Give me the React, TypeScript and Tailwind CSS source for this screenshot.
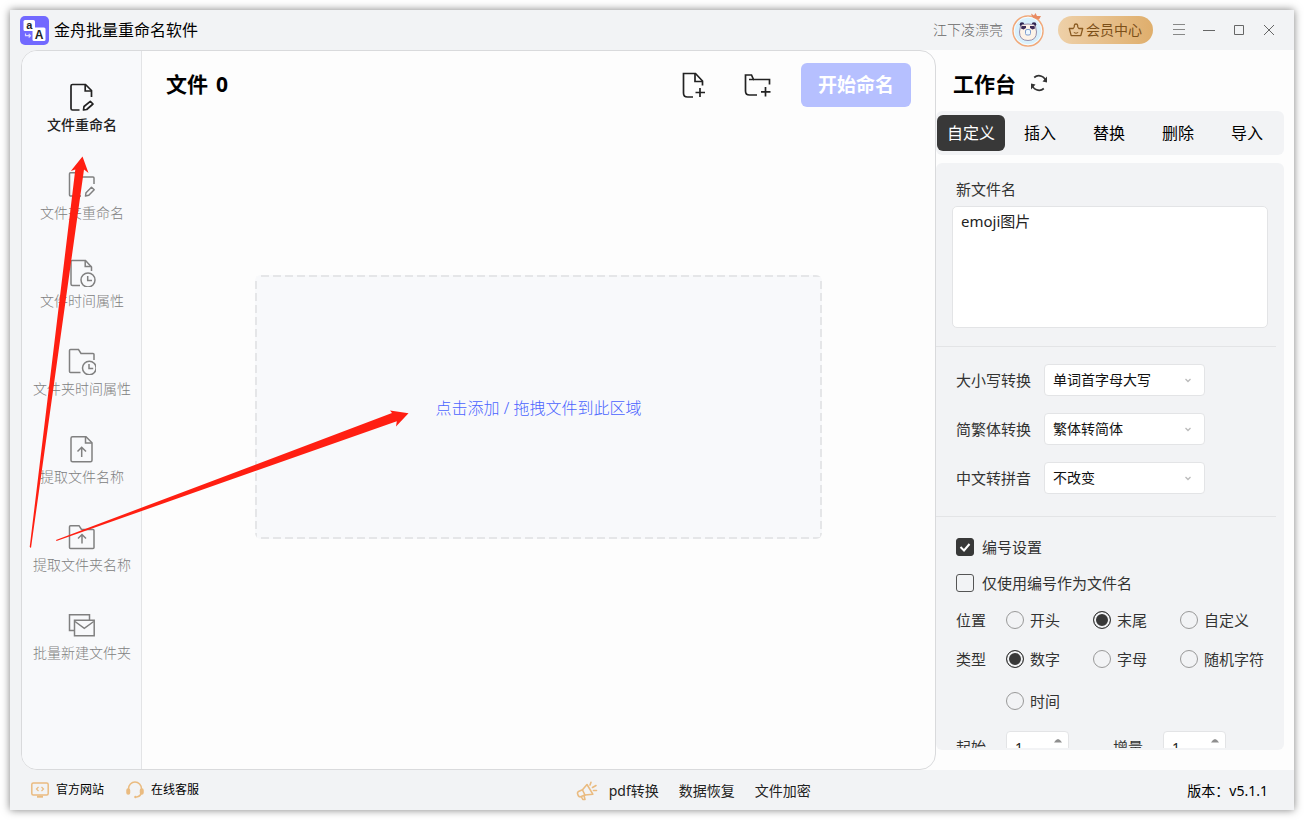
import { useState, type ReactNode } from 'react';

const iconProps = { fill: 'none', stroke: 'currentColor', strokeWidth: 1.7 } as const;

function FileEdit() {
  return (
    <svg viewBox="0 0 28 28" className="size-7" {...iconProps} aria-hidden="true">
      <path d="M11.500 27H4.500Q3 27 3 25.500V3Q3 1.500 4.500 1.500H17.500L23.500 7.500V14" />
      <path d="M17.200 1.500V8H23.500" />
      <path d="M15.500 27L16 23.500 22.300 18.300 25 21 18.700 26.500Z" strokeLinejoin="round" />
    </svg>
  );
}

function FolderEdit() {
  return (
    <svg viewBox="0 0 28 28" className="size-7" {...iconProps} strokeWidth={1.5} aria-hidden="true">
      <path d="M13 25H2.500Q1.500 25 1.500 24V2.700Q1.500 1.700 2.500 1.700H11L13.500 6H25Q26 6 26 7V13" />
      <path d="M17.500 25L18 21.700 23.500 16.200 26.200 18.800 20.800 24.300Z" strokeLinejoin="round" />
    </svg>
  );
}

function FileClock() {
  return (
    <svg viewBox="0 0 28 28" className="size-7" {...iconProps} strokeWidth={1.5} aria-hidden="true">
      <path d="M12 26.500H4.500Q3 26.500 3 25V2.500Q3 1.500 4 1.500H17.500L23.500 8V12" />
      <path d="M17.200 1.500V7.500H23.500" />
      <circle cx="20" cy="21" r="7" />
      <path d="M19.700 17V21.500H24" />
    </svg>
  );
}

function FolderClock() {
  return (
    <svg viewBox="0 0 28 28" className="size-7" {...iconProps} strokeWidth={1.5} aria-hidden="true">
      <path d="M12.500 25.500H2.500Q1.500 25.500 1.500 24.500V3.500Q1.500 2.500 2.500 2.500H10.500L13 6.500H25Q26 6.500 26 7.500V13" />
      <circle cx="21.300" cy="21" r="6.800" />
      <path d="M21 17V21.500H25.200" />
    </svg>
  );
}

function FileUp() {
  return (
    <svg viewBox="0 0 28 28" className="size-7" {...iconProps} strokeWidth={1.5} aria-hidden="true">
      <path d="M4.500 1.700H18L24 7.700V25.300Q24 26.800 22.500 26.800H4.500Q3 26.800 3 25.300V3.200Q3 1.700 4.500 1.700Z" />
      <path d="M17.500 1.700V8H24" />
      <path d="M13.700 22V12.500M9.500 16.500L13.700 12.300 18 16.500" />
    </svg>
  );
}

function FolderUp() {
  return (
    <svg viewBox="0 0 28 28" className="size-7" {...iconProps} strokeWidth={1.5} aria-hidden="true">
      <path d="M2.500 2.700H11L13.500 6.500H25Q26 6.500 26 7.500V24.500Q26 25.500 25 25.500H2.500Q1.500 25.500 1.500 24.500V3.700Q1.500 2.700 2.500 2.700Z" />
      <path d="M14 20.500V12M10 15.500L14 11.500 18 15.500" />
    </svg>
  );
}

function BatchFolder() {
  return (
    <svg viewBox="0 0 28 28" className="size-7" {...iconProps} strokeWidth={1.5} aria-hidden="true">
      <path d="M6.500 19.500H1.500V3.700H21.500V9" />
      <path d="M6.500 9.200H26.200V24.700H6.500Z" />
      <path d="M7 10.500L16.300 17.300 25.700 10.500" />
    </svg>
  );
}

const navItems: { label: string; icon: ReactNode }[] = [
  { label: '文件重命名', icon: <FileEdit /> },
  { label: '文件夹重命名', icon: <FolderEdit /> },
  { label: '文件时间属性', icon: <FileClock /> },
  { label: '文件夹时间属性', icon: <FolderClock /> },
  { label: '提取文件名称', icon: <FileUp /> },
  { label: '提取文件夹名称', icon: <FolderUp /> },
  { label: '批量新建文件夹', icon: <BatchFolder /> },
];

function Logo() {
  return (
    <svg viewBox="0 0 29 29" className="size-[29px] shrink-0" aria-hidden="true">
      <rect width="29" height="29" rx="5" fill="#7269ff" />
      <rect x="3.500" y="4" width="11.500" height="11" rx="1.500" fill="#fff" />
      <rect x="12.500" y="11.500" width="13" height="13.500" rx="1.500" fill="#fff" />
      <text x="9.200" y="13" textAnchor="middle" fontSize="11" fontWeight="700" fontFamily="Liberation Sans, sans-serif" fill="#222">a</text>
      <text x="19" y="22.500" textAnchor="middle" fontSize="12" fontWeight="700" fontFamily="Liberation Sans, sans-serif" fill="#222">A</text>
      <path d="M5.500 17.500V19.700H10.500M8.700 17.900L10.500 19.700 8.700 21.500" fill="none" stroke="#dcd9ff" strokeWidth="1.200" />
    </svg>
  );
}

function Avatar() {
  return (
    <svg viewBox="0 0 34 36" className="h-9 w-[34px] shrink-0" role="img" aria-label="头像">
      <circle cx="17" cy="19" r="15" fill="#d9f0fc" stroke="#f2a878" strokeWidth="1.500" />
      <circle cx="17" cy="19" r="13.800" fill="none" stroke="#fff" strokeWidth="0.800" />
      <path d="M21 4.500L20 1.500 23 3.500 24.500 1 26 4 30 4 28 7.500 22.500 6Z" fill="#e88a62" />
      <circle cx="11" cy="12.500" r="2.300" fill="#2f2450" />
      <circle cx="23" cy="12.500" r="2.300" fill="#2f2450" />
      <path d="M9.500 14Q10.500 12 17 12T24.500 14L25.500 20Q25.500 28.500 17 28.500T8.500 20Z" fill="#fdf3e8" stroke="#8e83a3" strokeWidth="0.900" />
      <path d="M10.500 14H15V16L12.500 17.500 10 16.500ZM23.500 14H19V16L21.500 17.500 24 16.500Z" fill="#3b2a55" />
      <rect x="14.500" y="17.500" width="5" height="5.500" rx="1.500" fill="#eef8ff" stroke="#7f9fd0" />
    </svg>
  );
}

function Crown() {
  return (
    <svg viewBox="0 0 16 16" className="size-4" fill="none" stroke="#8a5a20" strokeWidth="1.300" strokeLinejoin="round" aria-hidden="true">
      <path d="M3.200 13.700L1.300 6.500H5.200Q6.800 5.500 6.300 3.500Q6.500 2 8 2T9.700 3.500Q9.200 5.500 10.800 6.500H14.700L12.800 13.700Z" />
      <path d="M5.800 10.500Q8 12 10.200 10.500" strokeWidth="1" />
    </svg>
  );
}

function WindowButton({ label, children }: { label: string; children: ReactNode }) {
  return (
    <button type="button" aria-label={label} className="flex size-[30px] items-center justify-center text-[#666]">
      <svg viewBox="0 0 12 12" className="size-3" fill="none" stroke="currentColor" aria-hidden="true">
        {children}
      </svg>
    </button>
  );
}

function TitleBar() {
  return (
    <header className="flex h-10 shrink-0 items-center justify-between pr-2.5 pl-2.5">
      <div className="flex items-center gap-[5px]">
        <Logo />
        <h1 className="text-base text-black">金舟批量重命名软件</h1>
      </div>
      <div className="flex items-center">
        <span className="text-sm font-light text-[#666]">江下凌漂亮</span>
        <span className="mr-[13px] ml-2">
          <Avatar />
        </span>
        <button type="button" className="mr-[11px] flex h-7 items-center gap-0.5 rounded-full bg-linear-to-r from-[#eed0a8] to-[#dfae6c] pr-[11px] pl-2.5 text-sm text-[#7c4f18]">
          <Crown />
          会员中心
        </button>
        <WindowButton label="菜单">
          <path d="M0 0.500H12M0 5.500H12M0 10.500H12" stroke="#888" />
        </WindowButton>
        <WindowButton label="最小化">
          <path d="M0 6.500H12" />
        </WindowButton>
        <WindowButton label="最大化">
          <path d="M1.500 1.500H10.500V10.500H1.500Z" />
        </WindowButton>
        <WindowButton label="关闭">
          <path d="M1 1L11 11M11 1L1 11" />
        </WindowButton>
      </div>
    </header>
  );
}

function Sidebar() {
  const [active, setActive] = useState(0);
  return (
    <nav className="w-[120px] shrink-0 border-r border-[#e3e4e6] bg-[#f8f9fb] pt-8 pl-px">
      {navItems.map((item, i) => (
        <button
          key={item.label}
          type="button"
          onClick={() => setActive(i)}
          className={
            i === active
              ? 'flex h-[88px] w-full flex-col items-center gap-1 text-sm font-medium text-[#222]'
              : 'flex h-[88px] w-full flex-col items-center gap-1 text-sm font-light text-[#808080]'
          }
        >
          {item.icon}
          <span>{item.label}</span>
        </button>
      ))}
    </nav>
  );
}

function FileArea() {
  return (
    <main className="flex min-w-0 flex-1 flex-col">
      <div className="flex h-[68px] shrink-0 items-center justify-between pr-6 pl-6">
        <h2 className="flex gap-2 text-[21px] font-bold text-black">
          文件 <span>0</span>
        </h2>
        <div className="flex items-center">
          <button type="button" aria-label="添加文件" className="mr-9">
            <svg viewBox="0 0 28 28" className="size-7" fill="none" stroke="#222" strokeWidth="1.700" aria-hidden="true">
              <path d="M13 26H7.500Q3.500 26 3.500 22V2.500H15.500L22.500 10V14.500" />
              <path d="M15 2.500V10.500H22.500M20 17V26M15.500 21.500H25" />
            </svg>
          </button>
          <button type="button" aria-label="添加文件夹" className="mr-[29px]">
            <svg viewBox="0 0 28 28" className="size-7" fill="none" stroke="#222" strokeWidth="1.700" aria-hidden="true">
              <path d="M13 24H5.500Q1.500 24 1.500 20V4H7.500L9.500 8.500H25.500V13.500" />
              <path d="M5 8.500H10M21.500 16V25.500M17 20.800H26.500" />
            </svg>
          </button>
          <button type="button" className="h-11 w-[110px] rounded-md bg-[#b6c0ff] text-[19px] font-bold text-white">
            开始命名
          </button>
        </div>
      </div>
      <div className="flex flex-1 items-center justify-center pb-[74px]">
        <button
          type="button"
          className="flex h-[264px] w-5/7 items-center justify-center rounded-md bg-[#f8f9fb] bg-no-repeat pt-0.5 text-base font-light text-[#4a64ff] [background-image:repeating-linear-gradient(90deg,#e5e6e8_0_2px,transparent_2px_6px,#e5e6e8_6px_12px),repeating-linear-gradient(90deg,#e5e6e8_0_2px,transparent_2px_6px,#e5e6e8_6px_12px),repeating-linear-gradient(#e5e6e8_0_2px,transparent_2px_6px,#e5e6e8_6px_12px),repeating-linear-gradient(#e5e6e8_0_2px,transparent_2px_6px,#e5e6e8_6px_12px)] [background-position:top,bottom,left,right] [background-size:100%_2px,100%_2px,2px_100%,2px_100%]"
        >
          点击添加 / 拖拽文件到此区域
        </button>
      </div>
    </main>
  );
}

const conversions = [
  { id: 'letter-case', label: '大小写转换', options: ['单词首字母大写', '不改变'] },
  { id: 'script', label: '简繁体转换', options: ['繁体转简体', '不改变'] },
  { id: 'pinyin', label: '中文转拼音', options: ['不改变'] },
];

function Check({ label, defaultChecked }: { label: string; defaultChecked?: boolean }) {
  return (
    <label className="flex h-5 items-center gap-2">
      <span className="relative flex size-[18px]">
        <input type="checkbox" defaultChecked={defaultChecked} className="peer size-[18px] appearance-none rounded-[3px] border border-[#555] checked:border-[#383838] checked:bg-[#383838]" />
        <svg viewBox="0 0 18 18" className="pointer-events-none absolute inset-0 hidden size-[18px] peer-checked:block" fill="none" stroke="#fff" strokeWidth="2" aria-hidden="true">
          <path d="M4.500 9L8 12.500 13.500 6" />
        </svg>
      </span>
      {label}
    </label>
  );
}

function Radio({ name, label, defaultChecked }: { name: string; label: string; defaultChecked?: boolean }) {
  return (
    <label className="flex h-5 items-center gap-1.5 whitespace-nowrap">
      <input
        type="radio"
        name={name}
        defaultChecked={defaultChecked}
        className="size-[18px] shrink-0 appearance-none rounded-full border border-[#999] checked:border-[#383838] checked:bg-[#383838] checked:shadow-[inset_0_0_0_2px_#f2f3f5]"
      />
      {label}
    </label>
  );
}

function NumberField({ id, label }: { id: string; label: string }) {
  const [value, setValue] = useState(1);
  return (
    <div className="flex h-8 w-[157px] items-center">
      <label htmlFor={id} className="w-[50px]">
        {label}
      </label>
      <span className="relative flex">
        <input
          id={id}
          type="number"
          value={value}
          onChange={(e) => setValue(Number(e.target.value))}
          className="h-8 w-[63px] appearance-none rounded border border-[#e3e4e6] bg-white pl-2 text-sm text-[#222] [appearance:textfield] [&::-webkit-inner-spin-button]:appearance-none"
        />
        <span className="absolute inset-y-0 right-1.5 flex flex-col justify-center gap-2">
          <button type="button" aria-label={`${label}加一`} onClick={() => setValue(value + 1)}>
            <svg viewBox="0 0 10 5" className="h-[5px] w-2.5" fill="#8f8f8f" aria-hidden="true">
              <path d="M1 4.500Q5 -2.500 9 4.500Z" />
            </svg>
          </button>
          <button type="button" aria-label={`${label}减一`} onClick={() => setValue(value - 1)}>
            <svg viewBox="0 0 10 5" className="h-[5px] w-2.5" fill="#8f8f8f" aria-hidden="true">
              <path d="M1 0.500Q5 7.500 9 0.500Z" />
            </svg>
          </button>
        </span>
      </span>
    </div>
  );
}

const tabs = ['自定义', '插入', '替换', '删除', '导入'];

function Workbench() {
  const [tab, setTab] = useState(0);
  return (
    <aside className="flex w-[358px] shrink-0 flex-col pr-2.5 pb-5">
      <div className="flex h-[61px] shrink-0 items-center gap-3.5 pt-2 pl-[17px]">
        <h2 className="text-[21px] font-bold text-black">工作台</h2>
        <button type="button" aria-label="重置" className="pb-1">
          <svg viewBox="0 0 18 18" className="size-[18px]" fill="none" stroke="#333" strokeWidth="1.700" aria-hidden="true">
            <path d="M4.200 3.500A7.200 7.200 0 0 1 16 8" />
            <path d="M13.800 14.500A7.200 7.200 0 0 1 2 10" />
            <path d="M17 2.500V8.500L12.500 7.500ZM1 15.500V9.500L5.500 10.500Z" fill="#333" stroke="none" />
          </svg>
        </button>
      </div>
      <div role="tablist" className="flex h-11 shrink-0 items-center gap-px rounded-md bg-[#f2f3f5] pr-[3px] pl-px">
        {tabs.map((name, i) => (
          <button
            key={name}
            type="button"
            role="tab"
            aria-selected={i === tab}
            onClick={() => setTab(i)}
            className={i === tab ? 'h-9 flex-1 rounded-md bg-[#383838] text-base text-white' : 'h-9 flex-1 rounded-md text-base text-black'}
          >
            {name}
          </button>
        ))}
      </div>
      <form className="mt-2 min-h-0 flex-1 overflow-hidden rounded-md bg-[#f2f3f5] pb-0.5 text-[15px] text-[#333]">
        <div className="flex h-full flex-col overflow-hidden pt-3.5">
          <div className="flex shrink-0 flex-col px-4">
            <label htmlFor="new-name" className="mb-[5px] pl-1 leading-6">
              新文件名
            </label>
            <textarea
              id="new-name"
              defaultValue="emoji图片"
              className="h-[122px] resize-none rounded-[5px] border border-[#e3e4e6] bg-white px-2 py-[3px] leading-[22px] text-[#222]"
            />
          </div>
          <hr className="mt-[18px] mr-2 shrink-0 border-[#e3e4e6]" />
          <div className="mt-[17px] flex shrink-0 flex-col gap-[17px] pl-5">
            {conversions.map((c) => (
              <div key={c.id} className="flex items-center">
                <label htmlFor={c.id} className="w-[88px]">
                  {c.label}
                </label>
                <span className="relative flex">
                  <select id={c.id} className="h-8 w-[161px] appearance-none rounded border border-[#e3e4e6] bg-white pl-2 text-sm text-[#111]">
                    {c.options.map((o) => (
                      <option key={o}>{o}</option>
                    ))}
                  </select>
                  <svg viewBox="0 0 8 8" className="pointer-events-none absolute top-3 right-[13px] size-2" fill="none" stroke="#bbb" strokeWidth="1.300" aria-hidden="true">
                    <path d="M1.500 3L4 5.500 6.500 3" />
                  </svg>
                </span>
              </div>
            ))}
          </div>
          <hr className="mt-[22px] mr-2 shrink-0 border-[#e3e4e6]" />
          <div className="mt-5 flex shrink-0 flex-col pl-5">
            <div className="flex flex-col gap-4">
              <Check label="编号设置" defaultChecked />
              <Check label="仅使用编号作为文件名" />
            </div>
            <div role="radiogroup" aria-label="位置" className="mt-[17px] grid grid-cols-[50px_87px_87px_1fr]">
              <span className="leading-5">位置</span>
              <Radio name="position" label="开头" />
              <Radio name="position" label="末尾" defaultChecked />
              <Radio name="position" label="自定义" />
            </div>
            <div role="radiogroup" aria-label="类型" className="mt-[19px] grid grid-cols-[50px_87px_87px_1fr] gap-y-[22px]">
              <span className="leading-5">类型</span>
              <Radio name="kind" label="数字" defaultChecked />
              <Radio name="kind" label="字母" />
              <Radio name="kind" label="随机字符" />
              <span />
              <Radio name="kind" label="时间" />
            </div>
            <div className="mt-5 flex">
              <NumberField id="start" label="起始" />
              <NumberField id="step" label="增量" />
            </div>
          </div>
        </div>
      </form>
    </aside>
  );
}

function StatusBar() {
  return (
    <footer className="flex h-10 shrink-0 items-center justify-between pr-[26px] pl-[21px] text-sm text-black">
      <div className="flex items-center gap-[22px] text-xs">
        <a href="#site" className="flex items-center gap-[7px]">
          <svg viewBox="0 0 18 18" className="size-[18px]" fill="none" stroke="#eabb80" strokeWidth="1.500" aria-hidden="true">
            <rect x="0.800" y="2" width="16.400" height="12" rx="1.500" />
            <path d="M7.500 6L5.500 8 7.500 10M10.500 6L12.500 8 10.500 10" strokeWidth="1.200" />
            <path d="M6 15.700H12" strokeWidth="2" />
          </svg>
          官方网站
        </a>
        <a href="#support" className="flex items-center gap-[7px]">
          <svg viewBox="0 0 18 18" className="size-[18px]" fill="none" stroke="#eabb80" strokeWidth="1.500" aria-hidden="true">
            <path d="M2.500 9.500V7.800A6.500 6.800 0 0 1 15.500 7.800V9.500M15.200 12Q14.500 15.500 10.500 16" />
            <rect x="1" y="8" width="2.500" height="5" rx="1.200" fill="#eabb80" />
            <rect x="14.500" y="8" width="2.500" height="5" rx="1.200" fill="#eabb80" />
            <circle cx="9.500" cy="16" r="1.300" fill="#eabb80" stroke="none" />
          </svg>
          在线客服
        </a>
      </div>
      <div className="flex items-center gap-5 pt-px text-[#222]">
        <a href="#pdf" className="flex items-center gap-[11px]">
          <svg viewBox="0 0 22 20" className="h-5 w-[22px]" fill="none" stroke="#eabb80" strokeWidth="1.600" strokeLinejoin="round" strokeLinecap="round" aria-hidden="true">
            <path d="M2.500 10.500L6.500 8.800 11 3.500 16.800 13.200 9 14 4.500 15.800Q3 16 2.200 14.500L1.500 12.500Q1.300 11.200 2.500 10.500Z" />
            <path d="M6.500 9L9 14M5.500 16L6.800 18.500H9L8 14.500M14 4L15 1.200M16.500 6.500L20 4.500M17.500 9.500H20.500" />
          </svg>
          pdf转换
        </a>
        <a href="#recover">数据恢复</a>
        <a href="#encrypt">文件加密</a>
      </div>
      <span className="pt-px">版本：v5.1.1</span>
    </footer>
  );
}

export default function App() {
  return (
    <div className="relative h-screen overflow-hidden bg-white p-2.5 font-['Noto_Sans','Noto_Sans_CJK_SC',sans-serif]">
      <div className="flex h-full flex-col bg-[#f2f3f5] shadow-[0_0_8px_rgba(0,0,0,0.5)]">
        <TitleBar />
        <div className="flex min-h-0 flex-1 bg-linear-to-r from-[#f2f3f5] from-50% to-[#fdfdfd] to-50% pl-[11px]">
          <div className="flex min-w-0 flex-1 overflow-hidden rounded-2xl border border-[#d9dadc] bg-[#fdfdfd]">
            <Sidebar />
            <FileArea />
          </div>
          <Workbench />
        </div>
        <StatusBar />
      </div>
      <svg viewBox="0 0 1304 820" className="pointer-events-none absolute top-0 left-0 h-[820px] w-[1304px]" fill="#ff1f12" aria-hidden="true">
        <path d="M82.500 156.500L88.500 173 84 169.500 31 548 29.700 547 75.300 169.500 70.800 171Z" />
        <path d="M408.500 413.300L396 426.500 396.800 421.300 56.500 541 56 540 392 413 390 410.500Z" />
      </svg>
    </div>
  );
}
